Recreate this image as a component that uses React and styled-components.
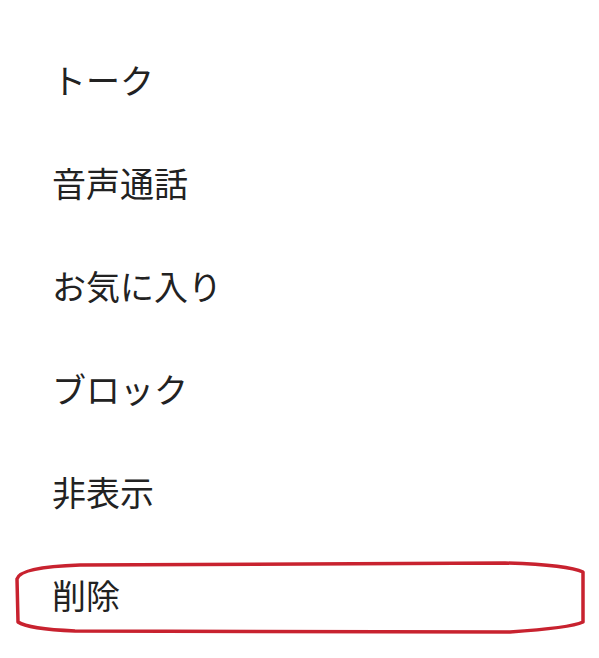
import React from "react";
import styled, { createGlobalStyle } from "styled-components";

const GlobalStyle = createGlobalStyle`
  body {
    margin: 0;
    background: #ffffff;
    font-family: "Noto Sans CJK JP", "Noto Sans", sans-serif;
  }
`;

const Page = styled.div`
  position: relative;
  width: 599px;
  height: 658px;
  padding-top: 28px;
  box-sizing: border-box;
  overflow: hidden;
`;

const MenuList = styled.ul`
  list-style: none;
  margin: 0;
  padding: 0;
  display: flex;
  flex-direction: column;
`;

const MenuItem = styled.li`
  height: 103px;
  display: flex;
  align-items: center;
  padding-left: 52px;
  font-size: 34px;
  color: #222222;
`;

const Highlight = styled.svg`
  position: absolute;
  top: 0;
  left: 0;
  pointer-events: none;
`;

const items = ["トーク", "音声通話", "お気に入り", "ブロック", "非表示", "削除"];

const App = () => {
  return (
    <Page>
      <GlobalStyle />
      <MenuList>
        {items.map(item => (
          <MenuItem key={item}>{item}</MenuItem>
        ))}
      </MenuList>
      <Highlight width="599" height="658" viewBox="0 0 599 658">
        <path
          d="M 80 565 L 505 563 Q 568 565 583 572 L 583 622 Q 570 628 510 632 L 75 631 Q 28 629 18 622 L 17 579 Q 20 567 80 565 Z"
          fill="none"
          stroke="#c8222f"
          strokeWidth="3.5"
          strokeLinejoin="round"
        />
      </Highlight>
    </Page>
  );
};

export default App;
